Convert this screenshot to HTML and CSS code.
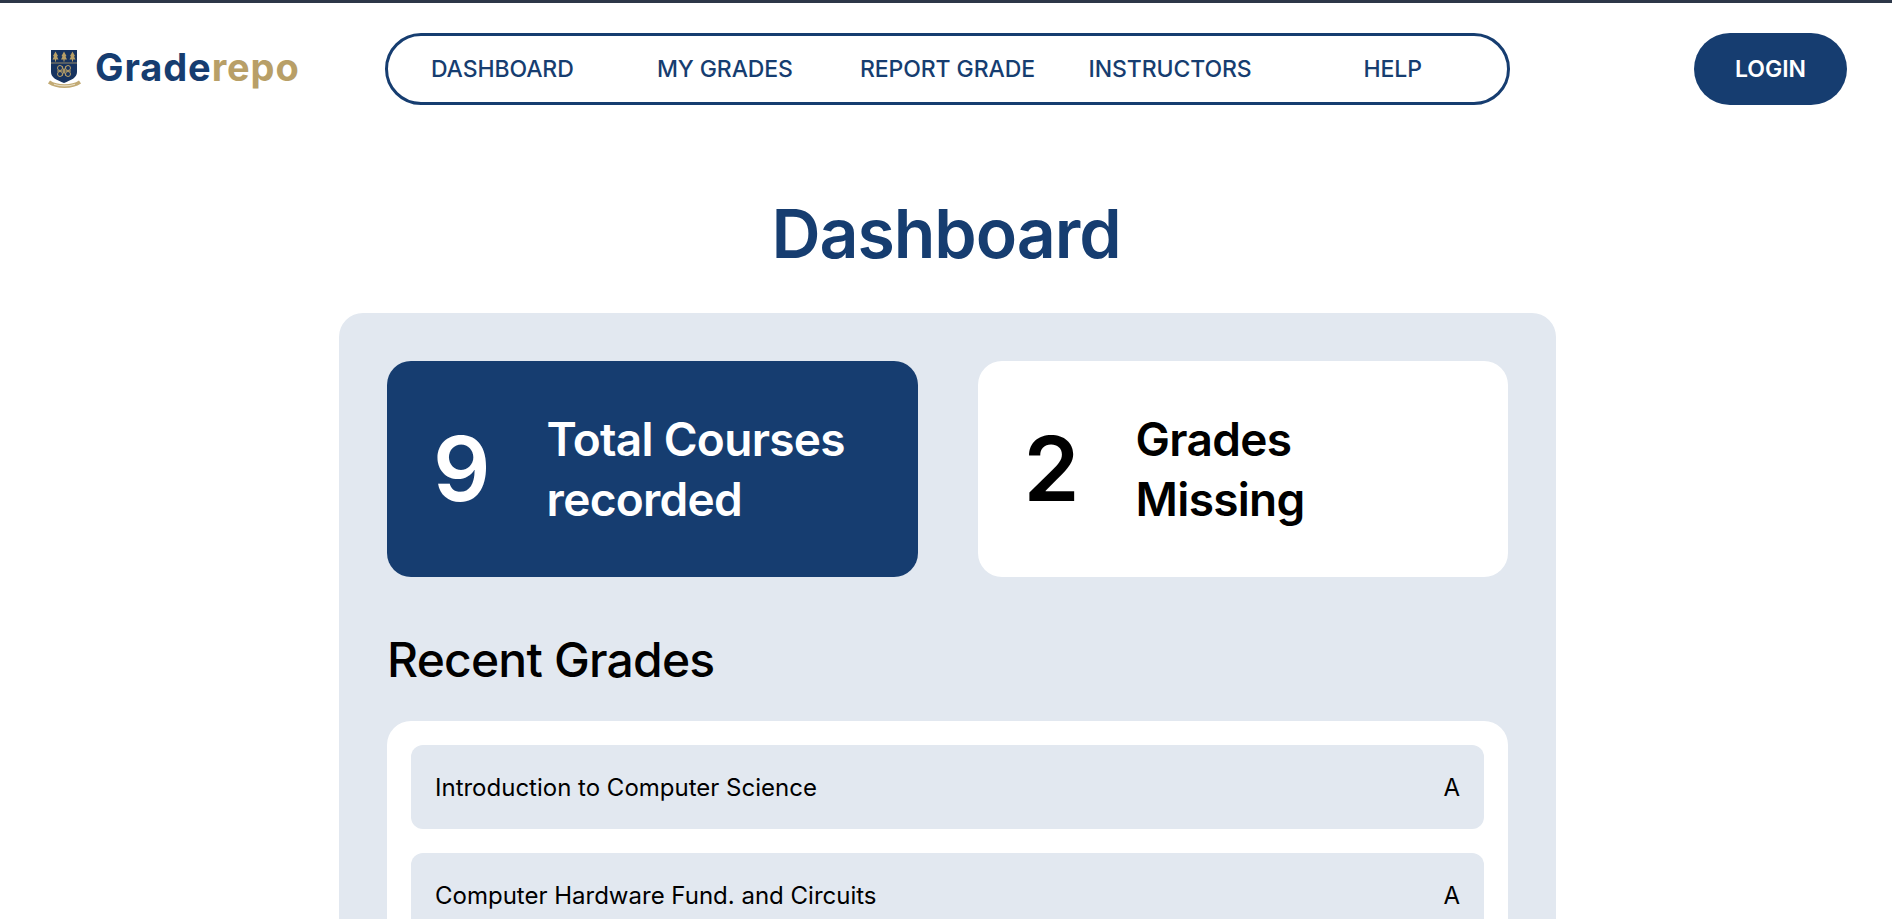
FILE: index.html
```html
<!DOCTYPE html>
<html lang="en">
<head>
  <meta charset="UTF-8">
  <title>Graderepo – Dashboard</title>
  <link rel="stylesheet" href="styles.css">
</head>
<body>
  <div class="page">

    <!-- header -->
    <header class="header">
      <a class="logo" href="#">
        <svg class="crest" viewBox="0 0 36 42" width="36" height="42" aria-hidden="true">
          <path d="M4 2H30V24C30 30 24 32 17 35C10 32 4 30 4 24Z" fill="#17335f"/>
          <path d="M4 15H30" stroke="#c9ad6d" stroke-width=".7"/>
          <g fill="#b89f67">
            <path d="M8.500 3.500L11 8L10 8.500L11.500 11.500H9V13.500H8V11.500H5.500L7 8.500L6 8Z"/>
            <path d="M17 3.500L19.500 8L18.500 8.500L20 11.500H17.500V13.500H16.500V11.500H14L15.500 8.500L14.500 8Z"/>
            <path d="M25.500 3.500L28 8L27 8.500L28.500 11.500H26V13.500H25V11.500H22.500L24 8.500L23 8Z"/>
          </g>
          <g fill="none" stroke="#b89f67" stroke-width="1">
            <circle cx="13" cy="20" r="2.500"/>
            <circle cx="21" cy="20" r="2.500"/>
            <circle cx="13" cy="26" r="2.500"/>
            <circle cx="21" cy="26" r="2.500"/>
            <path d="M10 23H24M15 18L19 28M19 18L15 28"/>
          </g>
          <path d="M2 34C10 39.500 25 39.500 33 34" fill="none" stroke="#c2aa74" stroke-width="3.600"/>
          <path d="M7 36.200C13 38.500 22 38.500 28 36.200" fill="none" stroke="#e6dcc4" stroke-width="1.200"/>
        </svg>
        <span class="logo-text">Grade<span class="logo-accent">repo</span></span>
      </a>

      <nav class="nav">
        <a class="nav-link" href="#">DASHBOARD</a>
        <a class="nav-link" href="#">MY GRADES</a>
        <a class="nav-link" href="#">REPORT GRADE</a>
        <a class="nav-link" href="#">INSTRUCTORS</a>
        <a class="nav-link" href="#">HELP</a>
      </nav>

      <button class="login-btn">LOGIN</button>
    </header>

    <h1 class="page-title">Dashboard</h1>

    <!-- main panel -->
    <main class="panel">
      <div class="stats">
        <div class="stat stat-dark">
          <span class="stat-num">9</span>
          <span class="stat-label">Total Courses<br>recorded</span>
        </div>
        <div class="stat stat-light">
          <span class="stat-num">2</span>
          <span class="stat-label">Grades<br>Missing</span>
        </div>
      </div>

      <h2 class="section-title">Recent Grades</h2>

      <div class="grade-list">
        <div class="grade-row">
          <span class="grade-name">Introduction to Computer Science</span>
          <span>A</span>
        </div>
        <div class="grade-row">
          <span class="grade-name">Computer Hardware Fund. and Circuits</span>
          <span>A</span>
        </div>
      </div>
    </main>

  </div>
</body>
</html>
```

FILE: styles.css
```css
* { box-sizing: border-box; }

body {
  margin: 0;
  font-family: "Inter", "Liberation Sans", sans-serif;
  color: #000;
  background: #fff;
}

a { color: inherit; text-decoration: none; }

/* the page is cut at the window height, like the screenshot */
.page {
  height: 100vh;
  overflow: hidden;
  border-top: 3px solid #2d3748;
}

.header {
  display: flex;
  align-items: center;
  padding: 30px 45px 0 47px;
}

.logo { display: flex; align-items: center; gap: 12px; width: 338px; }
.crest { display: block; }
.logo-text { padding-bottom: 4px; font-size: 38px; font-weight: 700; color: #163d70; letter-spacing: .9px; }
.logo-accent { color: #b89f67; }

.nav {
  display: grid;
  grid-template-columns: repeat(5, 1fr);
  align-items: center;
  width: 1125px;
  height: 72px;
  padding: 0 3px;
  border: 3px solid #163d70;
  border-radius: 36px;
}

.nav-link {
  text-align: center;
  font-size: 23px;
  font-weight: 500;
  color: #163d70;
  letter-spacing: -.1px;
  white-space: nowrap;
}

.login-btn {
  margin-left: auto;
  width: 153px;
  height: 72px;
  border: 0;
  border-radius: 36px;
  background: #163d70;
  color: #fff;
  font-family: inherit;
  font-size: 23px;
  font-weight: 600;
}

.page-title {
  margin: 0;
  padding: 92px 0 44px;
  text-align: center;
  font-size: 68px;
  line-height: 72px;
  font-weight: 600;
  color: #163d70;
  letter-spacing: -1.05px;
}

.panel {
  width: 1217px;
  margin: 0 0 0 339px;
  padding: 48px;
  background: #e2e8f0;
  border-radius: 24px;
}

.stats { display: flex; gap: 60px; }

.stat {
  flex: 1;
  display: flex;
  align-items: center;
  gap: 56px;
  height: 216px;
  padding: 0 46px;
  border-radius: 24px;
}

.stat-dark { background: #163d70; color: #fff; }
.stat-light { background: #fff; color: #000; }

.stat-num { font-size: 90px; font-weight: 600; line-height: 1; }
.stat-label { font-size: 46px; line-height: 60px; font-weight: 600; letter-spacing: -.7px; }

.section-title {
  margin: 0;
  padding: 56px 0 34px;
  font-size: 48px;
  line-height: 54px;
  font-weight: 500;
  letter-spacing: -.8px;
}

.grade-list {
  display: flex;
  flex-direction: column;
  gap: 24px;
  padding: 24px;
  background: #fff;
  border-radius: 24px;
}

.grade-row {
  display: flex;
  justify-content: space-between;
  align-items: center;
  height: 84px;
  padding: 0 24px;
  background: #e2e8f0;
  border-radius: 12px;
  font-size: 24px;
}
```
